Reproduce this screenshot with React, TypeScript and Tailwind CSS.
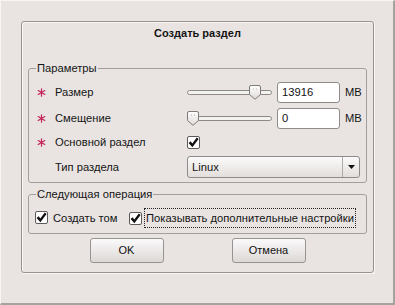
import React from "react";

const FONT = "font-['Liberation_Sans',Arial,sans-serif]";

function Star() {
  return (
    <svg width="9" height="9" viewBox="0 0 9 9" className="block">
      <g stroke="#c4245a" strokeWidth="1.2" strokeLinecap="round">
        <line x1="4.5" y1="0.8" x2="4.5" y2="8.2" />
        <line x1="1.2" y1="2.6" x2="7.8" y2="6.4" />
        <line x1="1.2" y1="6.4" x2="7.8" y2="2.6" />
      </g>
    </svg>
  );
}

function CheckBox() {
  return (
    <span className="flex h-[13px] w-[13px] shrink-0 items-center justify-center rounded-[2px] border border-[#5e5a58] bg-white">
      <svg width="11" height="11" viewBox="0 0 11 11">
        <path d="M0.6 6 L2.7 4.3 L4.3 6.4 L8.8 0.6 L10.6 2 L4.4 10.2 Z" fill="#111" />
      </svg>
    </span>
  );
}

function Slider({ offset }: { offset: number }) {
  return (
    <div className="relative h-[16px] w-[85px]">
      <div className="absolute left-0 right-0 top-[5px] h-[5px] rounded-full border border-[#8d8987] bg-[#f4f2f1]" />
      <svg
        width="12"
        height="15"
        viewBox="0 0 12 15"
        className="absolute top-0"
        style={{ left: offset }}
      >
        <defs>
          <linearGradient id="thumb" x1="0" y1="0" x2="0" y2="1">
            <stop offset="0" stopColor="#ffffff" />
            <stop offset="1" stopColor="#dedad8" />
          </linearGradient>
        </defs>
        <path
          d="M2 0.5 H10 A1.5 1.5 0 0 1 11.5 2 V9.5 L6 14.3 L0.5 9.5 V2 A1.5 1.5 0 0 1 2 0.5 Z"
          fill="url(#thumb)"
          stroke="#7f7b79"
        />
        <circle cx="4.5" cy="4" r="0.6" fill="#aaa6a4" />
        <circle cx="7.5" cy="4" r="0.6" fill="#aaa6a4" />
      </svg>
    </div>
  );
}

function Field({ value }: { value: string }) {
  return (
    <div className="ml-[5px] flex h-[21px] w-[63px] items-center rounded-[3px] border border-[#8f8b89] bg-white pl-[4px] text-[#111]">
      {value}
    </div>
  );
}

function Button({ children }: { children: React.ReactNode }) {
  return (
    <button className="flex h-[25px] w-[74px] items-center justify-center rounded-[3px] border border-[#979391] bg-gradient-to-b from-[#fbfafa] to-[#dcd8d6] text-[11px] text-[#111]">
      {children}
    </button>
  );
}

export default function App() {
  return (
    <div
      className={`${FONT} h-[305px] w-[395px] border-l border-t border-[#f8f6f5] border-r-2 border-b-2 border-r-[#a6a2a0] border-b-[#a6a2a0] bg-[#e9e4e2] text-[11.2px] text-[#141414]`}
    >
      <div className="pl-[20px] pr-[20px] pt-[20px]">
        <div className="h-[252px] w-[353px] rounded-[3px] border border-[#979391] shadow-[1px_1px_0_#f9f7f6,inset_1px_1px_0_#f9f7f6]">
          <div className="flex h-[23px] items-center justify-center text-[11px] font-bold leading-none">
            Создать раздел
          </div>

          <fieldset className="mx-[6px] mt-[16px] rounded-[3px] border border-[#a29e9c] pb-[4px] pt-[7px]">
            <legend className="ml-[7px] px-[1px] leading-[14px]">Параметры</legend>

            <div className="flex h-[21px] items-center pl-[8px]">
              <span className="w-[18px]">
                <Star />
              </span>
              <span className="w-[132px]">Размер</span>
              <Slider offset={62} />
              <Field value="13916" />
              <span className="ml-[5px]">MB</span>
            </div>

            <div className="mt-[5px] flex h-[21px] items-center pl-[8px]">
              <span className="w-[18px]">
                <Star />
              </span>
              <span className="w-[132px]">Смещение</span>
              <Slider offset={0} />
              <Field value="0" />
              <span className="ml-[5px]">MB</span>
            </div>

            <div className="flex h-[27px] items-center pl-[8px]">
              <span className="w-[18px]">
                <Star />
              </span>
              <span className="w-[132px]">Основной раздел</span>
              <CheckBox />
            </div>

            <div className="flex h-[22px] items-center pl-[8px]">
              <span className="w-[18px]" />
              <span className="w-[132px]">Тип раздела</span>
              <div className="flex h-[22px] w-[173px] items-stretch rounded-[3px] border border-[#8f8b89] bg-gradient-to-b from-[#fbfafa] to-[#e2dedc]">
                <span className="flex flex-1 items-center pl-[4px]">Linux</span>
                <span className="flex w-[17px] items-center justify-center border-l border-[#aeaaa8]">
                  <svg width="7" height="4" viewBox="0 0 7 4">
                    <path d="M0 0 H7 L3.5 4 Z" fill="#111" />
                  </svg>
                </span>
              </div>
            </div>
          </fieldset>

          <fieldset className="mx-[6px] mt-[4px] rounded-[3px] border border-[#a29e9c] pb-[5px] pt-[7px]">
            <legend className="ml-[7px] px-[1px] leading-[14px]">Следующая операция</legend>
            <div className="flex h-[20px] items-center pl-[6px]">
              <div className="flex w-[94px] items-center gap-[5px]">
                <CheckBox />
                <span>Создать том</span>
              </div>
              <CheckBox />
              <span className="ml-[2px] flex h-[20px] items-center border border-dotted border-[#222] px-[1px]">
                Показывать дополнительные настройки
              </span>
            </div>
          </fieldset>

          <div className="mt-[4px] flex justify-center gap-[68px]">
            <Button>OK</Button>
            <Button>Отмена</Button>
          </div>
        </div>
      </div>
    </div>
  );
}
